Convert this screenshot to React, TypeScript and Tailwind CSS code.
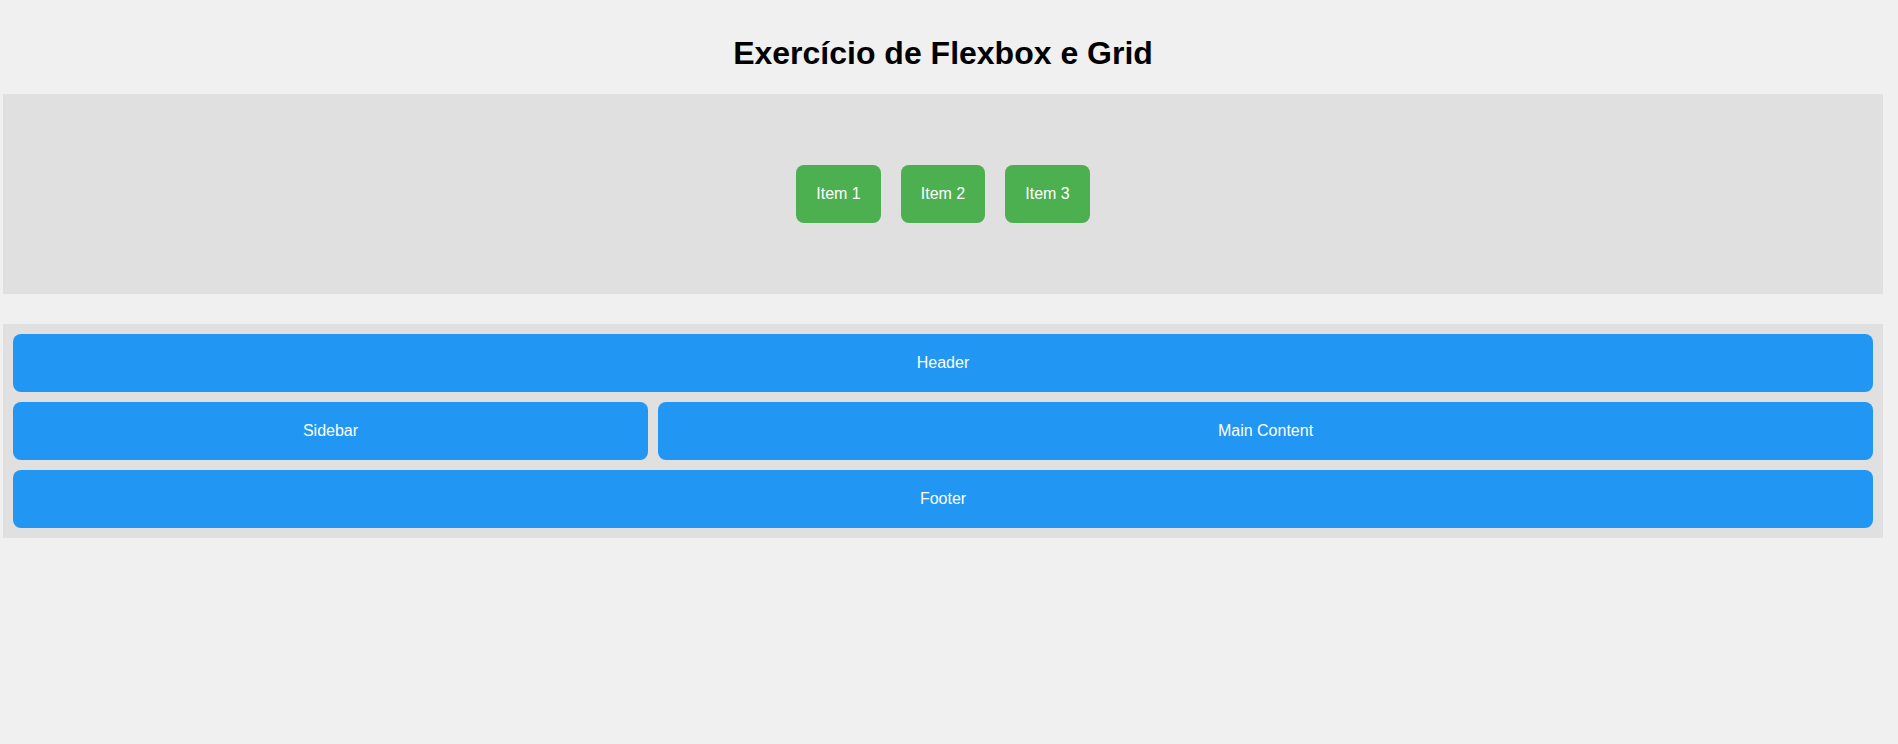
const items = ["Item 1", "Item 2", "Item 3"];

const Box = ({ label, className = "" }: { label: string; className?: string }) => (
  <div className={`bg-[#2196f3] text-white text-center p-5 rounded-lg leading-[18px] ${className}`}>
    {label}
  </div>
);

export default function App() {
  return (
    <div className="min-h-[744px] bg-[#f0f0f0] text-[16px] font-['Liberation_Sans',Arial,sans-serif]">
      <div className="w-[1880px] ml-[3px] pt-[35px]">
        <h1 className="text-[32px] leading-[37px] font-bold text-black text-center mb-[22px]">
          Exercício de Flexbox e Grid
        </h1>

        <div className="h-[200px] bg-[#e0e0e0] flex items-center justify-center gap-5">
          {items.map((item) => (
            <div key={item} className="bg-[#4caf50] text-white p-5 rounded-lg leading-[18px]">
              {item}
            </div>
          ))}
        </div>

        <div className="mt-[30px] bg-[#e0e0e0] p-[10px] flex flex-col gap-[10px]">
          <Box label="Header" />
          <div className="flex gap-[10px]">
            <Box label="Sidebar" className="grow" />
            <Box label="Main Content" className="grow-[2]" />
          </div>
          <Box label="Footer" />
        </div>
      </div>
    </div>
  );
}
